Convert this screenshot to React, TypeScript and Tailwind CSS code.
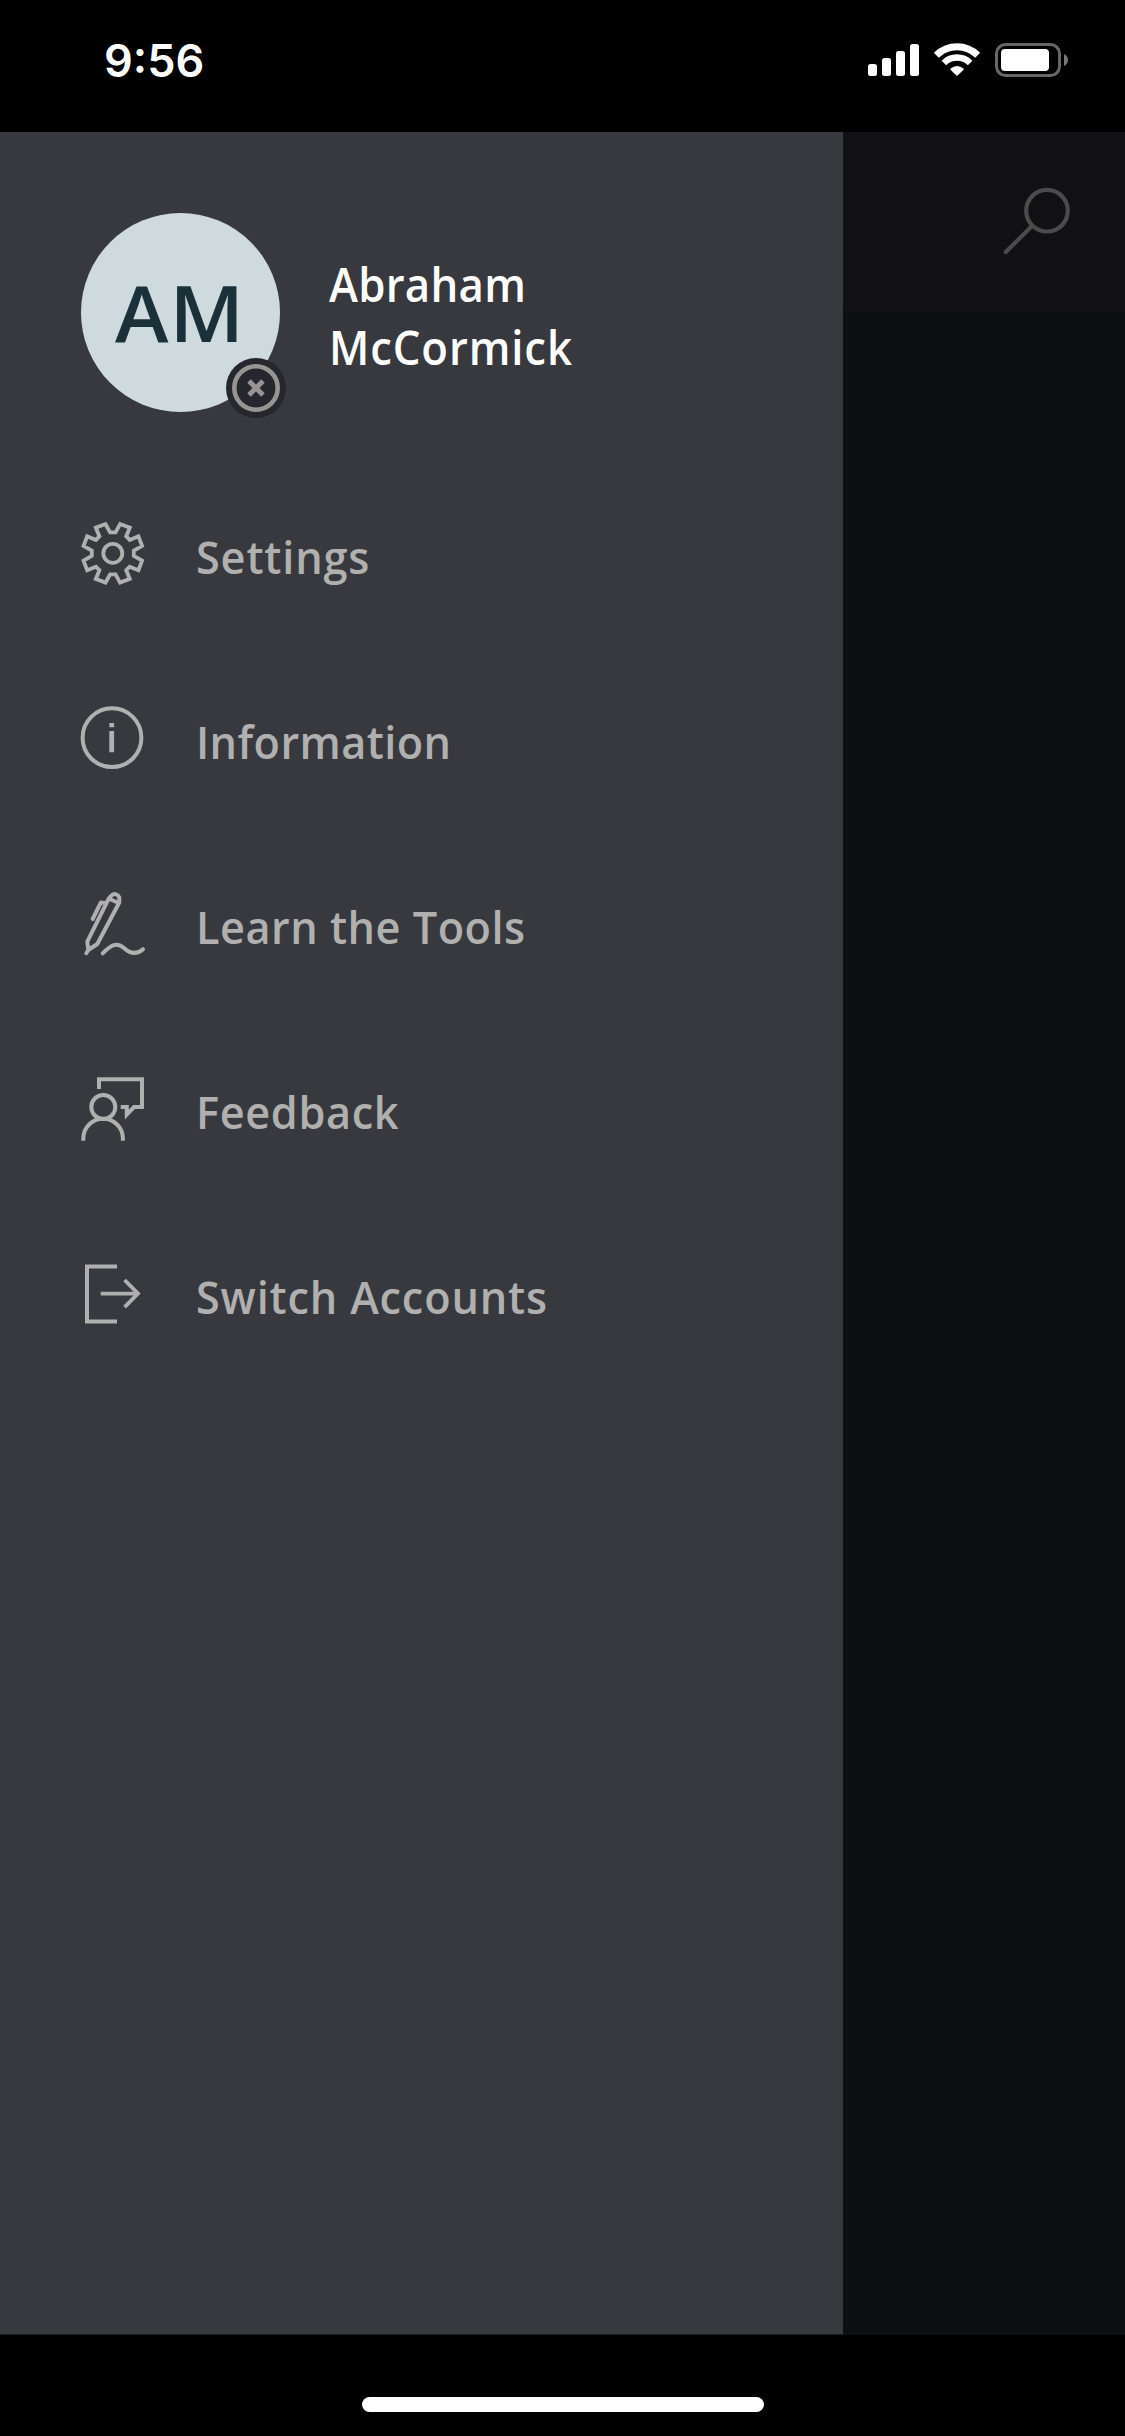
import React from "react";

const iconProps = {
  width: 64,
  height: 64,
  viewBox: "0 0 64 64",
  fill: "none",
  stroke: "currentColor",
  strokeWidth: 4,
  className: "mb-px shrink-0 overflow-visible",
};

const GearIcon = () => (
  <svg {...iconProps}>
    <g transform="translate(32.8 32.3)" strokeWidth="3.8">
      <path d="M-2.7 -21H2.7L7.3 -29.3L17 -25.6L13.4 -16.9L16.9 -13.4L25.6 -17L29.3 -7.3L21 -2.7V2.7L29.3 7.3L25.6 17L16.9 13.4L13.4 16.9L17 25.6L7.3 29.3L2.7 21H-2.7L-7.3 29.3L-17 25.6L-13.4 16.9L-16.9 13.4L-25.6 17L-29.3 7.3L-21 2.7V-2.7L-29.3 -7.3L-25.6 -17L-16.9 -13.4L-13.4 -16.9L-17 -25.6L-7.3 -29.3Z" />
      <circle r="9.5" />
    </g>
  </svg>
);

const InfoIcon = () => (
  <svg {...iconProps}>
    <circle cx="32" cy="31.7" r="29.4" />
    <path d="M31.7 17V21.3M31.7 25V46.3" strokeWidth="4.8" />
  </svg>
);

const PenIcon = () => (
  <svg {...iconProps} strokeLinecap="round" strokeLinejoin="round">
    <path d="M28.7 7.7L7.3 50.7L8.3 59L17.3 53L39.3 11.5V6.5C38 3.5 35 2.6 33 3.3Q30.5 5 28.7 7.7ZM29.5 8L38.8 12M8.3 59L6.3 62.2M12.7 28L20.8 11.6L25 12M22.7 62.3C31 54 37 50.5 44 57C51 63.5 57 63.5 63 58.2" />
  </svg>
);

const FeedbackIcon = () => (
  <svg {...iconProps}>
    <path d="M19 13V3.2H62V31H54L46.8 38.6V31H40.7" />
    <circle cx="23.3" cy="31" r="12" />
    <path d="M3.3 64.7V62.5A19.8 19.8 0 0 1 42.9 62.5V64.7" />
  </svg>
);

const SwitchIcon = () => (
  <svg {...iconProps}>
    <path d="M37 5.5H7V60.5H37" />
    <path d="M20.7 32.6H58M44.6 19L58 32.6L44.6 46.2" strokeWidth="3.8" />
  </svg>
);

const items = [
  { label: "Settings", Icon: GearIcon, tracking: "tracking-[0.9px]" },
  { label: "Information", Icon: InfoIcon, tracking: "tracking-[0.45px]" },
  { label: "Learn the Tools", Icon: PenIcon, tracking: "tracking-[0.55px]" },
  { label: "Feedback", Icon: FeedbackIcon, tracking: "tracking-[0.7px]" },
  { label: "Switch Accounts", Icon: SwitchIcon, tracking: "tracking-[0.88px]" },
];

function StatusBar() {
  return (
    <header className="flex h-[132px] items-start justify-between bg-black pl-[104px] pr-[56px] pt-[40px] text-white">
      <div className="font-['Inter',sans-serif] text-[45px] font-semibold leading-[41px]">9:56</div>
      <div className="flex items-start">
        <svg width="52" height="40" viewBox="0 0 52 40" fill="white" className="mr-[13px]">
          <rect x="0" y="24" width="9" height="12" rx="2.5" />
          <rect x="14" y="18" width="9" height="18" rx="2.5" />
          <rect x="28" y="11" width="9" height="25" rx="2.5" />
          <rect x="42" y="4" width="9" height="32" rx="2.5" />
        </svg>
        <svg width="48" height="40" viewBox="3 0 48 40" fill="none" stroke="white" className="mr-[14px]">
          <path d="M6.3 15.3A29.3 29.3 0 0 1 47.7 15.3" strokeWidth="7" />
          <path d="M13.9 22.9A18.5 18.5 0 0 1 40.1 22.9" strokeWidth="6.4" />
          <path d="M27 35L21 29.2Q27 24.5 33 29.2Z" fill="white" strokeWidth="1.5" strokeLinejoin="round" />
        </svg>
        <svg width="74" height="40" viewBox="0 0 74 40">
          <rect x="1.5" y="4.5" width="63" height="31" rx="9" fill="none" stroke="#666" strokeWidth="3" />
          <rect x="6" y="9" width="48" height="22" rx="4" fill="white" />
          <path d="M69 14Q73 16 73 20T69 26Z" fill="#777" />
        </svg>
      </div>
    </header>
  );
}

export default function App() {
  return (
    <div className="flex h-[2436px] w-[1125px] flex-col overflow-hidden bg-black font-['Open_Sans','Noto_Sans',sans-serif]">
      <StatusBar />
      <main className="flex h-[2203px]">
        <aside className="w-[843px] border-b border-[#1d1d20] bg-[#38393e] pl-[80px]">
          <div className="flex h-[329px] pl-px pt-[81px]">
            <div className="relative flex h-[199px] w-[199px] items-center justify-center rounded-full bg-[#cfdadf]">
              <span className="mr-px scale-x-[1.03] text-[78.5px] font-semibold leading-none tracking-[1px] text-[#1b3139]">AM</span>
              <svg className="absolute left-[145px] top-[145px]" width="60" height="60" viewBox="0 0 60 60" fill="none" stroke="#979593">
                <circle cx="30" cy="30" r="30" fill="#25262e" stroke="none" />
                <circle cx="30" cy="30" r="21.7" strokeWidth="4.6" />
                <path d="M23 23L37 37M37 23L23 37" strokeWidth="5" />
              </svg>
            </div>
            <h1 className="ml-[49px] mt-[40px] origin-left scale-x-[0.94] text-[46.5px] font-semibold leading-[63px] text-white">
              <span className="tracking-[0.3px]">Abraham</span>
              <br />
              <span className="tracking-[0.95px]">McCormick</span>
            </h1>
          </div>
          <nav>
            {items.map(({ label, Icon, tracking }) => (
              <a key={label} className="flex h-[185px] items-center text-[#b0b0b0]">
                <Icon />
                <span className={`ml-[52px] origin-left scale-x-[0.94] pt-[4px] text-[46px] font-semibold leading-[60px] ${tracking}`}>{label}</span>
              </a>
            ))}
          </nav>
        </aside>
        <section className="flex-1 bg-[#0d0f10]">
          <div className="flex h-[178px] justify-end bg-[#111113] pr-[54px] pt-[55px]">
            <svg width="70" height="70" viewBox="0 0 70 70" fill="none" stroke="#4b4b4b" strokeWidth="4.2" strokeLinecap="round">
              <circle cx="46" cy="23.7" r="20.8" />
              <path d="M31 39L4.8 65" />
            </svg>
          </div>
        </section>
      </main>
      <footer className="flex flex-1 justify-center bg-black pt-[62px]">
        <div className="h-[15px] w-[402px] rounded-full bg-white" />
      </footer>
    </div>
  );
}
